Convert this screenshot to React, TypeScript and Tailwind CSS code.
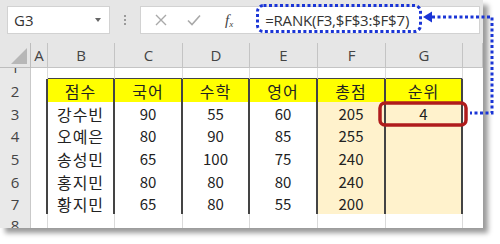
import React from 'react';

const COLS = ['A', 'B', 'C', 'D', 'E', 'F', 'G', ''];
const GRID = 'grid grid-cols-[31px_17px_67px_68px_67px_68px_68px_77px_20px]';

const rows = [
  { n: '2', h: 'h-[23px]', cells: ['점수', '국어', '수학', '영어', '총점', '순위'] },
  { n: '3', h: 'h-[22px]', cells: ['강수빈', '90', '55', '60', '205', '4'] },
  { n: '4', h: 'h-[23px]', cells: ['오예은', '80', '90', '85', '255', ''] },
  { n: '5', h: 'h-[23px]', cells: ['송성민', '65', '100', '75', '240', ''] },
  { n: '6', h: 'h-[22px]', cells: ['홍지민', '80', '80', '80', '240', ''] },
  { n: '7', h: 'h-[22px]', cells: ['황지민', '65', '80', '55', '200', ''] },
];

function RowHead({ n }: { n: string }) {
  return (
    <div className="flex items-center justify-center bg-[#e9e9e9] border-r border-b border-[#c9c9c9] text-[15px] text-[#444] font-['Open_Sans',sans-serif]">
      {n}
    </div>
  );
}

function EmptyRow({ n }: { n: string }) {
  return (
    <div className={`${GRID} h-[23px]`}>
      <RowHead n={n} />
      <div className="bg-white border-r border-b border-[#dadada]" />
      {[0, 1, 2, 3, 4, 5].map((i) => (
        <div key={i} className={`bg-white border-r border-b ${n === '1' ? 'border-b-2 border-b-[#444]' : ''} border-[#dadada]`} />
      ))}
      <div className="bg-white border-b border-[#dadada]" />
    </div>
  );
}

export default function App() {
  return (
    <div className="relative w-[500px] h-[244px] bg-white overflow-hidden">
      <div className="w-[483px] h-[228px] bg-[#e6e6e6] shadow-[5px_5px_5px_rgba(0,0,0,0.4)] flex flex-col overflow-hidden">
        {/* formula bar */}
        <div className="h-[43px] flex items-start pt-[6px] pl-[7px] pr-[3px]">
          <div className="w-[103px] h-[28px] bg-white border border-[#d2d2d2] flex items-center justify-between pl-[6px] pr-[8px]">
            <span className="text-[15px] text-[#333] font-['Open_Sans',sans-serif]">G3</span>
            <span className="w-0 h-0 border-l-[3px] border-r-[3px] border-t-[4px] border-l-transparent border-r-transparent border-t-[#666]" />
          </div>
          <div className="w-[30px] h-[28px] flex flex-col items-center justify-center gap-[2px]">
            <span className="w-[2px] h-[2px] bg-[#9a9a9a]" />
            <span className="w-[2px] h-[2px] bg-[#9a9a9a]" />
            <span className="w-[2px] h-[2px] bg-[#9a9a9a]" />
          </div>
          <div className="flex-1 h-[28px] bg-white border border-[#d2d2d2] flex items-center">
            <svg width="12" height="12" viewBox="0 0 12 12" className="ml-[14px] shrink-0">
              <path d="M1 1L11 11M11 1L1 11" stroke="#a9a9a9" strokeWidth="1.4" />
            </svg>
            <svg width="14" height="12" viewBox="0 0 14 12" className="ml-[20px] shrink-0">
              <path d="M1 6.5L5 10.5L13 1.5" stroke="#a9a9a9" strokeWidth="1.6" fill="none" />
            </svg>
            <span className="ml-[24px] shrink-0 text-[15px] italic text-[#444] font-['Liberation_Serif',serif]">
              f<sub className="text-[9px]">x</sub>
            </span>
            <span className="ml-[32px] shrink-0 whitespace-nowrap text-[15px] text-[#333] font-['Open_Sans',sans-serif] tracking-[-0.2px]">
              =RANK(F3,$F$3:$F$7)
            </span>
          </div>
        </div>

        {/* column headers */}
        <div className={`${GRID} h-[25px] relative z-10`}>
          <div className="bg-[#e6e6e6] border-r border-b border-[#bdbdbd] flex items-end justify-end pr-[3px] pb-[3px]">
            <svg width="16" height="16" viewBox="0 0 16 16">
              <polygon points="16,0 16,16 0,16" fill="#b7b7b7" />
            </svg>
          </div>
          {COLS.map((c, i) => (
            <div
              key={i}
              className="bg-[#e6e6e6] border-r border-b border-[#c4c4c4] flex items-center justify-center text-[15px] text-[#444] font-['Open_Sans',sans-serif]"
            >
              {c}
            </div>
          ))}
        </div>

        {/* cells */}
        <div className="h-[160px] overflow-hidden">
          <div className="mt-[-12px] flex flex-col">
            <EmptyRow n="1" />
            {rows.map((r, ri) => (
              <div key={r.n} className={`${GRID} ${r.h}`}>
                <RowHead n={r.n} />
                <div className="bg-white border-r-2 border-r-[#444] border-b border-b-[#dadada]" />
                {r.cells.map((v, ci) => {
                  const bg = ri === 0 ? 'bg-[#ffff00]' : ci >= 4 ? 'bg-[#fff2cc]' : 'bg-white';
                  const size = ri === 0 || ci === 0 ? 'text-[16px] tracking-[1px]' : 'text-[15px]';
                  return (
                    <div
                      key={ci}
                      className={`${bg} ${size} border-r-2 border-b-2 border-[#444] flex items-center justify-center text-[#222] font-['Noto_Sans_CJK_KR',sans-serif]`}
                    >
                      {v}
                    </div>
                  );
                })}
                <div className="bg-white border-b border-[#dadada]" />
              </div>
            ))}
            <EmptyRow n="8" />
          </div>
        </div>
      </div>

      {/* annotations */}
      <svg className="absolute inset-0 pointer-events-none" width="500" height="244" viewBox="0 0 500 244">
        <rect x="257.5" y="5.5" width="163" height="26" rx="6" fill="none" stroke="#1a35d6" strokeWidth="3" strokeDasharray="3 2.5" />
        <path d="M432 17H492V113H470" fill="none" stroke="#1a35d6" strokeWidth="3" strokeDasharray="3 2.5" />
        <polygon points="423,17 432,11.5 432,22.5" fill="#1a35d6" />
        <rect x="380" y="103" width="86" height="22" rx="5" fill="none" stroke="#b01c1c" strokeWidth="3.5" />
      </svg>
    </div>
  );
}
